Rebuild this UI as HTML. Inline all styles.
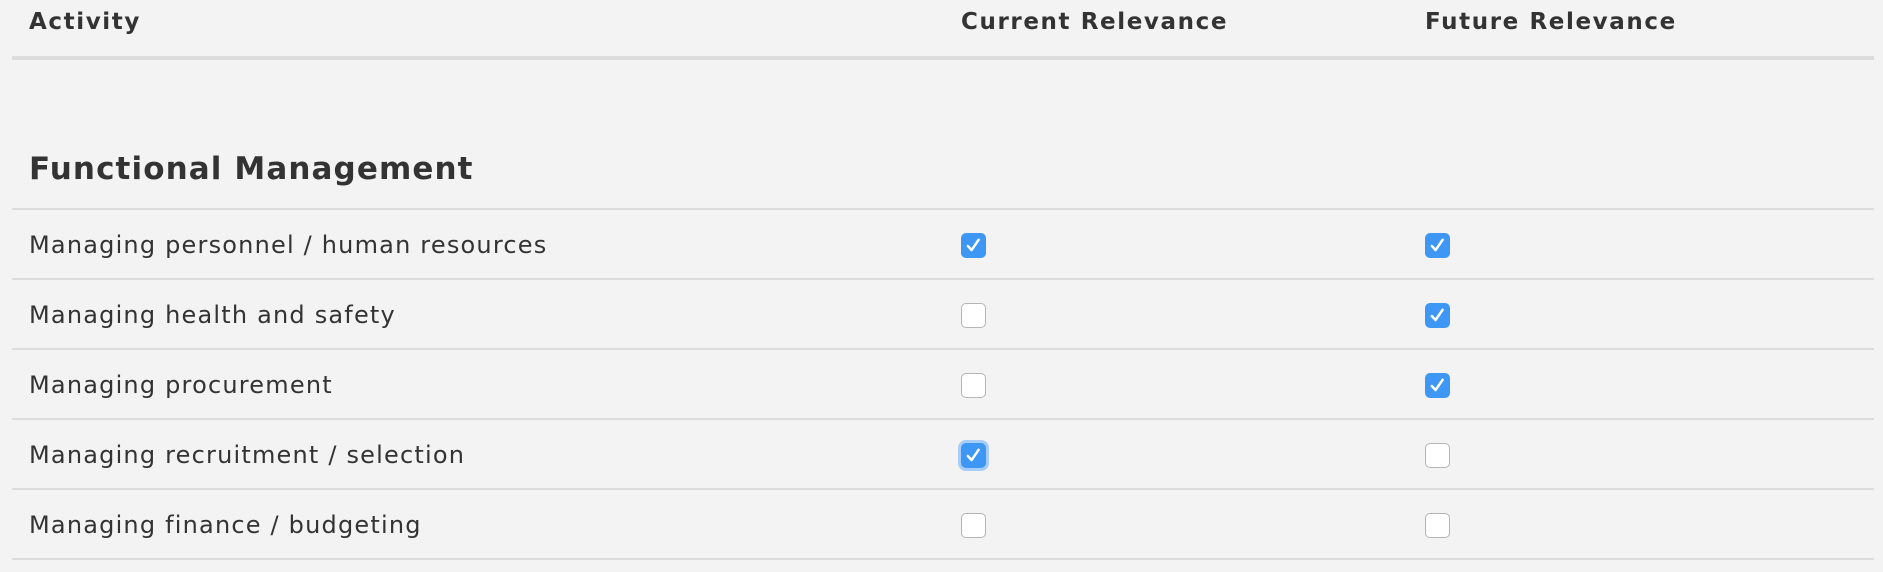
<!DOCTYPE html>
<html><head><style>
body{margin:0;background:#f3f3f3;width:1883px;height:572px;overflow:hidden;font-family:"DejaVu Sans","Liberation Sans",sans-serif;color:#333;}
.abs{position:absolute;}
.h{font-weight:bold;font-size:23px;top:9px;letter-spacing:1.6px;}
.line{position:absolute;left:12px;width:1862px;height:2px;background:#dcdcdc;}
.t{font-size:24px;position:absolute;left:29px;letter-spacing:1.2px;}
.cb{position:absolute;width:25px;height:25px;border-radius:5px;box-sizing:border-box;}
.off{background:#fff;border:1px solid #b5b5b5;}
.on{background:#3f97f5;}
.on svg{position:absolute;left:4px;top:4px}
.focus{box-shadow:0 0 0 3px #a7cdf8;}
</style></head><body>
<div class="abs h" style="left:29px">Activity</div>
<div class="abs h" style="left:961px">Current Relevance</div>
<div class="abs h" style="left:1425px">Future Relevance</div>
<div class="line" style="top:56px;height:4px"></div>
<div class="abs" style="left:29px;top:151px;font-size:31px;font-weight:bold;letter-spacing:1.1px">Functional Management</div>
<div class="line" style="top:208px"></div>
<div class="line" style="top:278px"></div>
<div class="line" style="top:348px"></div>
<div class="line" style="top:418px"></div>
<div class="line" style="top:488px"></div>
<div class="line" style="top:558px"></div>
<div class="t" style="top:231px">Managing personnel / human resources</div>
<div class="t" style="top:301px">Managing health and safety</div>
<div class="t" style="top:371px">Managing procurement</div>
<div class="t" style="top:441px">Managing recruitment / selection</div>
<div class="t" style="top:511px">Managing finance / budgeting</div>

<div class="cb on" style="left:961px;top:233px"><svg width="17" height="17" viewBox="0 0 15 15"><path d="M2.5 8 L5.8 11.5 L12 2.5" stroke="#fff" stroke-width="2.2" fill="none" stroke-linecap="round" stroke-linejoin="round"/></svg></div>
<div class="cb on" style="left:1425px;top:233px"><svg width="17" height="17" viewBox="0 0 15 15"><path d="M2.5 8 L5.8 11.5 L12 2.5" stroke="#fff" stroke-width="2.2" fill="none" stroke-linecap="round" stroke-linejoin="round"/></svg></div>
<div class="cb off" style="left:961px;top:303px"></div>
<div class="cb on" style="left:1425px;top:303px"><svg width="17" height="17" viewBox="0 0 15 15"><path d="M2.5 8 L5.8 11.5 L12 2.5" stroke="#fff" stroke-width="2.2" fill="none" stroke-linecap="round" stroke-linejoin="round"/></svg></div>
<div class="cb off" style="left:961px;top:373px"></div>
<div class="cb on" style="left:1425px;top:373px"><svg width="17" height="17" viewBox="0 0 15 15"><path d="M2.5 8 L5.8 11.5 L12 2.5" stroke="#fff" stroke-width="2.2" fill="none" stroke-linecap="round" stroke-linejoin="round"/></svg></div>
<div class="cb on focus" style="left:961px;top:443px"><svg width="17" height="17" viewBox="0 0 15 15"><path d="M2.5 8 L5.8 11.5 L12 2.5" stroke="#fff" stroke-width="2.2" fill="none" stroke-linecap="round" stroke-linejoin="round"/></svg></div>
<div class="cb off" style="left:1425px;top:443px"></div>
<div class="cb off" style="left:961px;top:513px"></div>
<div class="cb off" style="left:1425px;top:513px"></div>
</body></html>
